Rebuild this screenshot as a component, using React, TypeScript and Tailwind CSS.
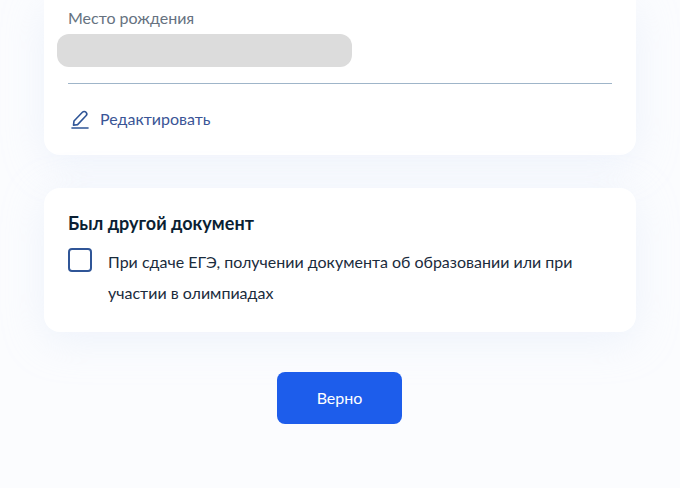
export default function App() {
  return (
    <div className="h-[488px] w-[680px] overflow-hidden bg-[#fbfcfe] font-['Lato',sans-serif]">
      <div className="mx-[44px] flex flex-col">
        <section className="rounded-b-[16px] bg-white px-[24px] pt-[8px] pb-[16px] shadow-[0_8px_40px_rgba(214,226,245,0.35)]">
          <div className="text-[16px] leading-[20px] text-[#66727f]">Место рождения</div>
          <div className="mt-[6px] -ml-[11px] h-[33px] w-[295px] rounded-[12px] bg-[#dcdcdc]" />
          <div className="mt-[16px] h-px bg-[#9fb5c9]" />
          <button className="mt-[15px] flex h-[40px] items-center gap-[8px] text-[16px] text-[#3a5596]">
            <svg width="24" height="24" viewBox="0 0 24 24" fill="none" stroke="#2f5597" strokeWidth="1.6" strokeLinecap="round" strokeLinejoin="round">
              <path d="M5.5 18.2 L6 14 L14.4 5.2 a2.5 2.5 0 0 1 3.6 0 a2.6 2.6 0 0 1 0 3.6 L9.6 17.6 Z" />
              <path d="M4 21 H20" />
            </svg>
            Редактировать
          </button>
        </section>
        <section className="mt-[33px] rounded-[16px] bg-white p-[24px] shadow-[0_8px_40px_rgba(214,226,245,0.35)]">
          <h2 className="text-[18px] leading-[22px] font-bold text-[#0b1f33]">Был другой документ</h2>
          <label className="mt-[14px] flex items-start gap-[16px]">
            <span className="h-[24px] w-[24px] shrink-0 rounded-[4px] border-2 border-[#2f5597] bg-white" />
            <span className="-mt-[2px] text-[16px] leading-[31px] text-[#1a2b3c]">
              При сдаче ЕГЭ, получении документа об образовании или при участии в олимпиадах
            </span>
          </label>
        </section>
        <button className="mt-[40px] ml-[233px] h-[52px] w-[125px] rounded-[8px] bg-[#1d5deb] text-[16px] text-white">Верно</button>
      </div>
    </div>
  );
}
